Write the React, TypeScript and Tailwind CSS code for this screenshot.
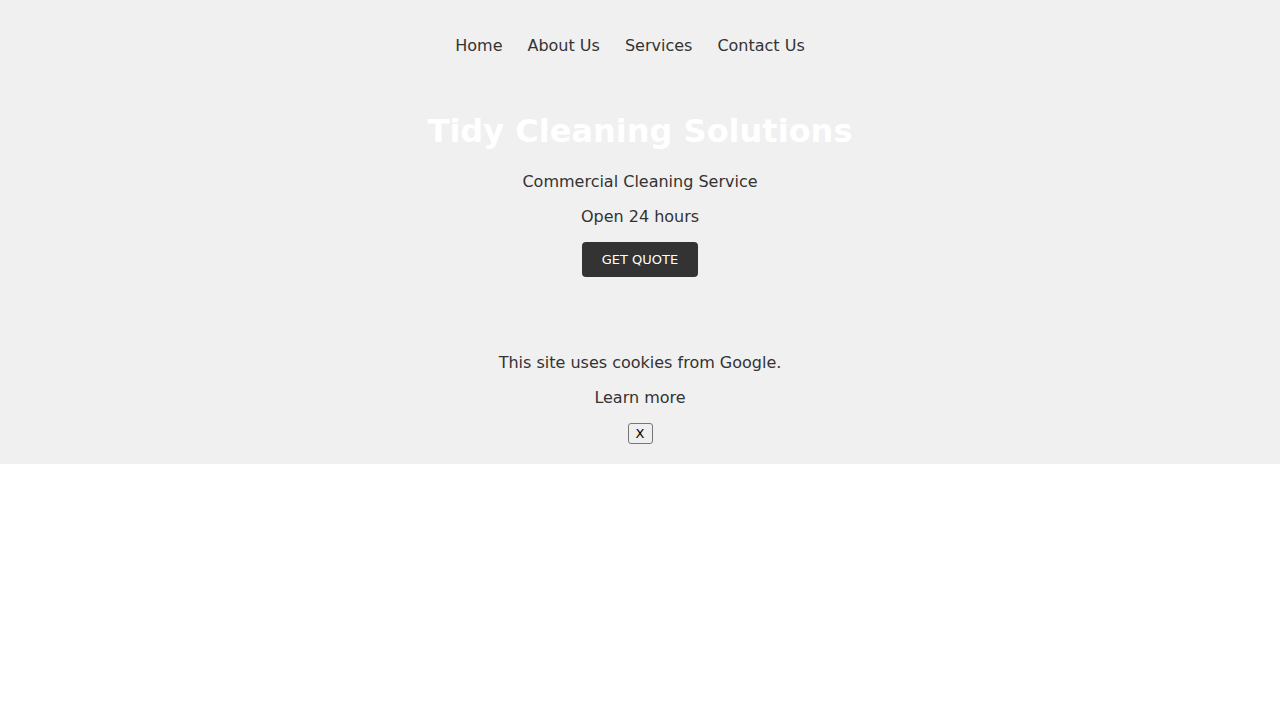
const navLinks = ["Home", "About Us", "Services", "Contact Us"];

export default function App() {
  return (
    <div
      className="bg-[#f0f0f0] text-[#333333] text-center pb-5"
      style={{ fontFamily: '"DejaVu Sans", Verdana, sans-serif' }}
    >
      <nav className="pt-[34px] pr-5 flex justify-center gap-[25px] text-base leading-6">
        {navLinks.map((l) => (
          <a key={l} href="#" className="text-[#333333]">
            {l}
          </a>
        ))}
      </nav>

      <header className="mt-[53px] flex flex-col items-center">
        <h1 className="text-[32px] leading-10 font-bold text-white">Tidy Cleaning Solutions</h1>
        <p className="mt-[19px] text-base leading-6">Commercial Cleaning Service</p>
        <p className="mt-[11px] text-base leading-6">Open 24 hours</p>
        <button className="mt-[13px] w-[116px] h-[35px] rounded bg-[#333333] text-white text-[13px]">
          GET QUOTE
        </button>
      </header>

      <div className="mt-[74px] flex flex-col items-center">
        <p className="text-base leading-6">This site uses cookies from Google.</p>
        <a href="#" className="mt-[11px] text-base leading-6 text-[#333333]">
          Learn more
        </a>
        <button className="mt-[13px] w-[25px] h-[21px] border border-[#767676] rounded-[3px] bg-[#efefef] text-[13px] leading-none text-black">
          X
        </button>
      </div>
    </div>
  );
}
